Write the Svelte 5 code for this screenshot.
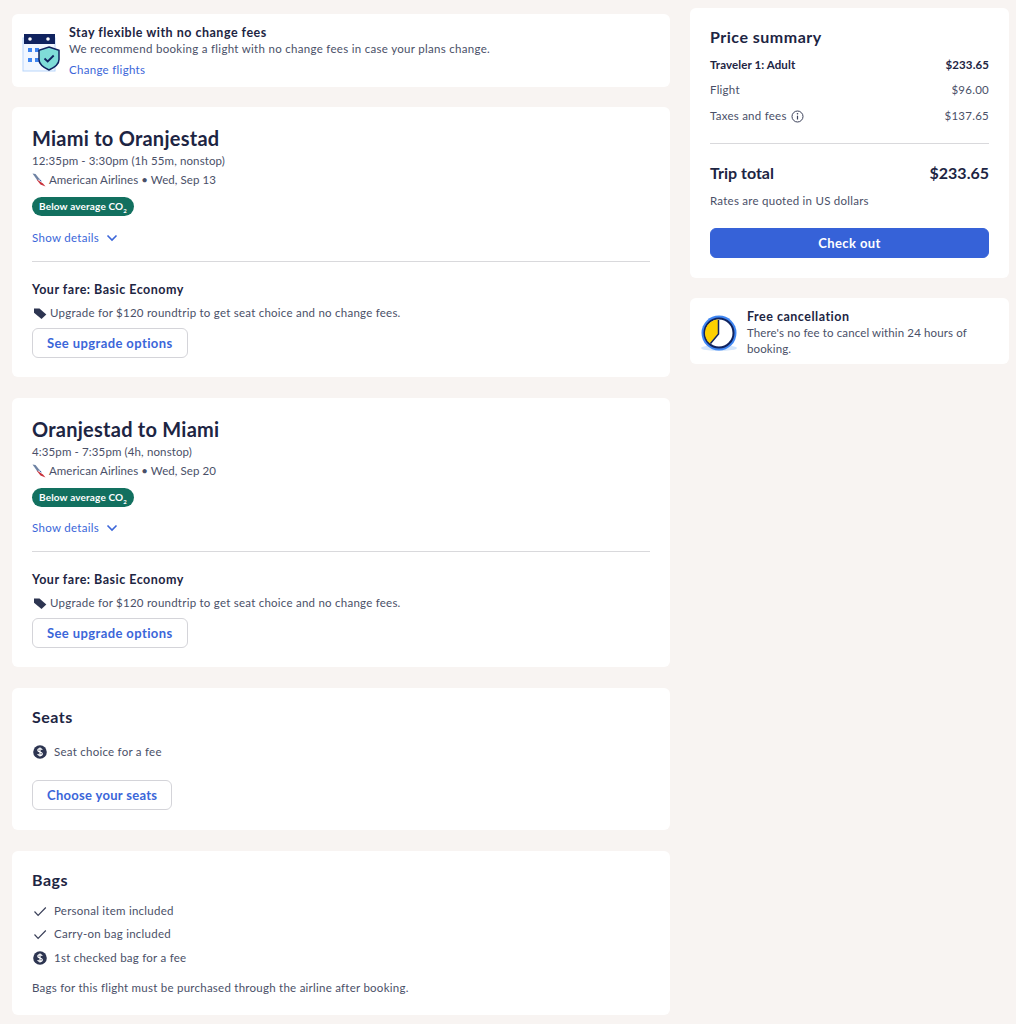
<script lang="ts">
  const flights = [
    { title: 'Miami to Oranjestad', time: '12:35pm - 3:30pm (1h 55m, nonstop)', date: 'Wed, Sep 13' },
    { title: 'Oranjestad to Miami', time: '4:35pm - 7:35pm (4h, nonstop)', date: 'Wed, Sep 20' }
  ];
</script>

{#snippet dollar()}
  <svg class="ico" width="14" height="14" viewBox="0 0 14 14">
    <circle cx="7" cy="7" r="6.8" fill="#2d3551" />
    <path d="M9.2 4.9C8.9 4 8 3.6 7 3.6c-1.2 0-2.2.6-2.2 1.7 0 2.3 4.5 1.1 4.5 3.400 0 1.100-1 1.700-2.300 1.700-1.100 0-2-.5-2.300-1.400M7 2.600v8.800" fill="none" stroke="#fff" stroke-width="1.200" />
  </svg>
{/snippet}

{#snippet check()}
  <svg class="ico" width="14" height="14" viewBox="0 0 14 14">
    <path d="M1.500 7.500l3.600 3.800L12.800 3.500" fill="none" stroke="#3a4059" stroke-width="1.200" />
  </svg>
{/snippet}

<div class="page">
  <main class="left">
    <section class="card notice">
      <svg class="cal" width="40" height="40" viewBox="0 0 40 40">
        <rect x="1" y="6" width="32" height="33" fill="#f2f7ff" stroke="#b9d6fb" />
        <rect x="2" y="2" width="31" height="10" fill="#10235f" />
        <circle cx="8" cy="7" r="1.800" fill="#fff" />
        <circle cx="26" cy="7" r="1.800" fill="#fff" />
        <rect x="6" y="16" width="4" height="4" fill="#3f86f2" />
        <rect x="13" y="16" width="4" height="4" fill="#3f86f2" />
        <rect x="6" y="26" width="4" height="4" fill="#3f86f2" />
        <rect x="13" y="26" width="4" height="4" fill="#3f86f2" />
        <path d="M27 15l10 3.200v9.300c0 5-4.500 8-10 10.500-5.500-2.500-10-5.500-10-10.500v-9.300z" fill="#7fdcd8" stroke="#10235f" stroke-width="1.500" />
        <path d="M22.500 26.500l3.200 3 6-6" fill="none" stroke="#10235f" stroke-width="1.800" />
      </svg>
      <div>
        <h4>Stay flexible with no change fees</h4>
        <p>We recommend booking a flight with no change fees in case your plans change.</p>
        <a href="#top">Change flights</a>
      </div>
    </section>

    {#each flights as f (f.title)}
      <section class="card flight">
        <h2>{f.title}</h2>
        <p class="line time">{f.time}</p>
        <p class="line airline">
          <svg width="14" height="14" viewBox="0 0 14 14">
            <path d="M0.500 0.500L3.500 1 7.500 6 5.500 7.500z" fill="#6d82a3" />
            <path d="M4.500 6.500L6.500 7.500 11 10.500 13.500 13.500 8.500 11.500z" fill="#c8303a" />
            <path d="M7 5.500L10 8.500 8 8z" fill="#2a4f9a" />
          </svg>
          American Airlines • {f.date}
        </p>
        <span class="badge">Below average CO<sub>2</sub></span>
        <a class="details" href="#top">
          Show details
          <svg width="12" height="8" viewBox="0 0 12 8"><path d="M1.500 1.500L6 6l4.500-4.500" fill="none" stroke="#3b66d9" stroke-width="1.600" /></svg>
        </a>
        <hr />
        <h5>Your fare: Basic Economy</h5>
        <p class="line upgrade">
          <svg width="14" height="14" viewBox="0 0 14 14">
            <path d="M1 2.500h5.500L13.300 8.500 8.500 13 1 6.800z" fill="#2d3551" />
          </svg>
          Upgrade for $120 roundtrip to get seat choice and no change fees.
        </p>
        <button>See upgrade options</button>
      </section>
    {/each}

    <section class="card seats">
      <h3>Seats</h3>
      <p class="line row">{@render dollar()} Seat choice for a fee</p>
      <button>Choose your seats</button>
    </section>

    <section class="card bags">
      <h3>Bags</h3>
      <p class="line row">{@render check()} Personal item included</p>
      <p class="line row">{@render check()} Carry-on bag included</p>
      <p class="line row">{@render dollar()} 1st checked bag for a fee</p>
      <p class="line foot">Bags for this flight must be purchased through the airline after booking.</p>
    </section>
  </main>

  <aside class="right">
    <section class="card summary">
      <h3>Price summary</h3>
      <div class="price strong"><span>Traveler 1: Adult</span><span>$233.65</span></div>
      <div class="price"><span>Flight</span><span>$96.00</span></div>
      <div class="price">
        <span class="tax">Taxes and fees
          <svg width="13" height="13" viewBox="0 0 13 13">
            <circle cx="6.500" cy="6.500" r="5.500" fill="none" stroke="#3a4059" />
            <path d="M6.500 5.700v3.800" stroke="#3a4059" stroke-width="1.200" />
            <circle cx="6.500" cy="3.800" r=".8" fill="#3a4059" />
          </svg>
        </span>
        <span>$137.65</span>
      </div>
      <hr />
      <div class="total"><span>Trip total</span><span>$233.65</span></div>
      <p class="line">Rates are quoted in US dollars</p>
      <button class="primary">Check out</button>
    </section>

    <section class="card cancel">
      <svg width="38" height="38" viewBox="0 0 38 38">
        <ellipse cx="19" cy="34" rx="18" ry="3" fill="#d5e6fb" />
        <circle cx="19" cy="19" r="17.500" fill="#3f86f2" />
        <circle cx="19" cy="19" r="14.500" fill="#fff" stroke="#10235f" stroke-width="2" />
        <path d="M18.500 5.500A13.500 13.500 0 0 0 10 29.500L18.500 20z" fill="#fdd000" />
        <path d="M18.500 6V20L10.500 29.500" fill="none" stroke="#10235f" stroke-width="1.500" />
      </svg>
      <div>
        <h5>Free cancellation</h5>
        <p class="line">There's no fee to cancel within 24 hours of booking.</p>
      </div>
    </section>
  </aside>
</div>

<style>
  :global(body) {
    background: #f8f4f2;
    font-family: Lato, "Open Sans", sans-serif;
    color: #1d2543;
  }
  .page {
    display: flex;
    align-items: flex-start;
    gap: 20px;
    padding: 8px 7px 8px 12px;
  }
  .left {
    width: 658px;
    padding-top: 5.750px;
    display: flex;
    flex-direction: column;
    gap: 20.500px;
  }
  .right {
    width: 319px;
    display: flex;
    flex-direction: column;
    gap: 20px;
  }
  .card {
    background: #fff;
    border-radius: 6px;
    box-sizing: border-box;
  }
  h2, h3, h4, h5, p {
    margin: 0;
  }
  h2 {
    font-size: 20px;
    line-height: 28px;
    font-weight: 700;
    letter-spacing: .25px;
  }
  h3 {
    font-size: 16px;
    line-height: 20px;
    font-weight: 700;
    letter-spacing: .5px;
  }
  h4, h5 {
    font-size: 12.500px;
    line-height: 16px;
    font-weight: 700;
    letter-spacing: .5px;
  }
  .line {
    font-size: 11.500px;
    line-height: 16px;
    letter-spacing: .25px;
    color: #4a5068;
  }
  a {
    color: #3b66d9;
    text-decoration: none;
    font-size: 11.500px;
    letter-spacing: .3px;
  }
  hr {
    border: 0;
    border-top: 1px solid #d9d9dc;
    margin: 0;
  }
  button {
    display: block;
    height: 30px;
    padding: 0 14px;
    background: #fff;
    border: 1px solid #d4d4d9;
    border-radius: 6px;
    color: #3b66d9;
    font: 700 13px Lato, sans-serif;
    letter-spacing: .4px;
  }
  .notice {
    height: 73px;
    display: flex;
    gap: 7px;
    padding: 11px 10px;
  }
  .cal {
    margin-top: 7px;
    flex: none;
  }
  .notice p {
    font-size: 11.500px;
    line-height: 15px;
    letter-spacing: .3px;
    color: #4a5068;
  }
  .notice a {
    display: block;
    margin-top: 7px;
  }
  .flight {
    height: 269.750px;
    padding: 17px 20px;
  }
  .flight .time {
    margin-top: 1px;
    letter-spacing: .12px;
  }
  .flight .airline {
    display: flex;
    align-items: center;
    gap: 3px;
    margin-top: 3px;
    letter-spacing: .07px;
  }
  .badge {
    display: inline-block;
    margin-top: 9px;
    height: 19px;
    padding: 0 7px;
    border-radius: 10px;
    background: #12705f;
    color: #fff;
    font-size: 10px;
    line-height: 19px;
    font-weight: 700;
    letter-spacing: .15px;
  }
  .badge sub {
    font-size: 6px;
    line-height: 0;
  }
  .details {
    display: flex;
    align-items: center;
    gap: 7px;
    margin-top: 13.500px;
    line-height: 16px;
  }
  .flight hr {
    margin: 15px 0 20px;
  }
  .flight .upgrade {
    display: flex;
    align-items: center;
    gap: 3px;
    margin-top: 7px;
    letter-spacing: .24px;
  }
  .upgrade svg {
    margin-left: 1px;
  }
  .flight button {
    margin-top: 7px;
  }
  .seats {
    height: 142.250px;
    padding: 19px 20px 20px;
  }
  .seats .row {
    margin-top: 17px;
  }
  .seats button {
    margin-top: 20px;
    letter-spacing: .3px;
  }
  .row {
    display: flex;
    align-items: center;
    gap: 7px;
  }
  .row .ico {
    margin-left: 1px;
  }
  .ico {
    flex: none;
  }
  .bags {
    height: 164px;
    padding: 19px 20px 20px;
  }
  .bags .row {
    margin-top: 7.500px;
  }
  .bags h3 {
    margin-bottom: 13px;
  }
  .foot {
    margin-top: 14px;
  }
  .summary {
    height: 270px;
    padding: 19px 20px;
  }
  .summary h3 {
    margin-bottom: 10px;
  }
  .price {
    display: flex;
    justify-content: space-between;
    font-size: 11.500px;
    line-height: 16px;
    letter-spacing: .25px;
    color: #4a5068;
    margin-bottom: 9px;
  }
  .price + .price {
    margin-bottom: 10px;
  }
  .price.strong {
    font-weight: 700;
    letter-spacing: .1px;
    color: #1d2543;
  }
  .tax {
    display: flex;
    align-items: center;
    gap: 4px;
  }
  .summary hr {
    margin-top: 19px;
  }
  .total {
    display: flex;
    justify-content: space-between;
    font-size: 16px;
    line-height: 20px;
    font-weight: 700;
    margin: 19px 0 10px;
  }
  .primary {
    width: 100%;
    margin-top: 19px;
    background: #3662d8;
    border-color: #3662d8;
    color: #fff;
  }
  .cancel {
    height: 66px;
    display: flex;
    gap: 9px;
    padding: 11px 10px;
  }
  .cancel svg {
    flex: none;
    margin-top: 5px;
  }
  .cancel .line {
    letter-spacing: .12px;
  }
</style>
